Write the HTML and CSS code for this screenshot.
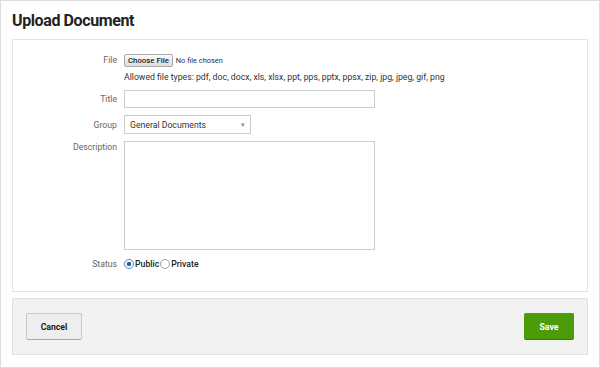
FILE: index.html
```html
<!DOCTYPE html>
<html>
<head>
  <title>Upload Document</title>
  <link rel="stylesheet" href="styles.css">
</head>
<body>
  <div class="page">
    <h1 class="page-title">Upload Document</h1>

    <div class="form-panel">
      <div class="form-row row-file">
        <label class="form-label">File</label>
        <div class="form-field">
          <button class="file-btn" type="button">Choose File</button>
          <span class="file-name">No file chosen</span>
        </div>
      </div>
      <div class="form-row row-hint">
        <span></span>
        <div class="form-hint">Allowed file types: pdf, doc, docx, xls, xlsx, ppt, pps, pptx, ppsx, zip, jpg, jpeg, gif, png</div>
      </div>
      <div class="form-row">
        <label class="form-label">Title</label>
        <input class="text-input" type="text">
      </div>
      <div class="form-row">
        <label class="form-label">Group</label>
        <div class="select-box">
          <span>General Documents</span>
          <span class="select-arrow">&#9662;</span>
        </div>
      </div>
      <div class="form-row row-top">
        <label class="form-label">Description</label>
        <textarea class="text-area"></textarea>
      </div>
      <div class="form-row row-status">
        <label class="form-label">Status</label>
        <div class="radio-group">
          <span class="radio checked"></span><span class="radio-text">Public</span>
          <span class="radio"></span><span class="radio-text">Private</span>
        </div>
      </div>
    </div>

    <div class="form-footer">
      <button class="btn btn-cancel" type="button">Cancel</button>
      <button class="btn btn-save" type="button">Save</button>
    </div>
  </div>
</body>
</html>
```

FILE: styles.css
```css
html, body {
  margin: 0;
  padding: 0;
  background: #ffffff;
}

body {
  font-family: Roboto, 'Liberation Sans', Arial, sans-serif;
  color: #333333;
}

.page {
  width: 600px;
  height: 368px;
  box-sizing: border-box;
  border: 1px solid #dddddd;
  padding: 0 11px;
}

.page-title {
  margin: 8px 0 6px 0;
  font-size: 16px;
  line-height: 24px;
  font-weight: 700;
  letter-spacing: -0.4px;
  color: #222222;
}

/* main form box */
.form-panel {
  border: 1px solid #e3e3e3;
  background: #ffffff;
  padding: 13px 0 21px 0;
  display: flex;
  flex-direction: column;
  gap: 7px;
}

.form-row {
  display: grid;
  grid-template-columns: 104px 1fr;
  column-gap: 7px;
  align-items: center;
}

.row-top { align-items: start; }
.row-hint { margin-top: -3px; }
.row-status { margin-top: 1px; }

.form-label {
  text-align: right;
  font-size: 8.7px;
  color: #666666;
  line-height: 12px;
}

.row-top .form-label { margin-top: 0; }

.form-field {
  display: flex;
  align-items: center;
  gap: 3px;
  height: 14px;
}

.file-btn {
  height: 13px;
  padding: 0 3px;
  margin: 0;
  font-family: inherit;
  font-size: 7.8px;
  font-weight: 500;
  color: #222222;
  background: linear-gradient(#fafafa, #dedede);
  border: 1px solid #a9a9a9;
  border-radius: 2px;
  line-height: 11px;
}

.file-name {
  font-size: 7.4px;
  color: #333333;
}

.form-hint {
  font-size: 8.7px;
  line-height: 12px;
  color: #333333;
}

.text-input {
  width: 251px;
  height: 18px;
  box-sizing: border-box;
  margin: 0;
  border: 1px solid #cccccc;
  padding: 2px 4px;
}

.select-box {
  width: 127px;
  height: 19px;
  box-sizing: border-box;
  border: 1px solid #cccccc;
  display: flex;
  align-items: center;
  justify-content: space-between;
  padding: 0 5px 0 5px;
  font-size: 8.7px;
  color: #333333;
}

.select-arrow {
  font-size: 7px;
  color: #888888;
}

.text-area {
  width: 251px;
  height: 109px;
  box-sizing: border-box;
  margin: 0;
  border: 1px solid #cccccc;
  resize: none;
  display: block;
}

.radio-group {
  display: flex;
  align-items: center;
  height: 12px;
  font-size: 8.7px;
  color: #222222;
}

.radio {
  width: 8px;
  height: 8px;
  border: 1px solid #a0a0a0;
  border-radius: 50%;
  background: #ffffff;
  margin: 0 1px 0 0;
}

.radio.checked {
  border-color: #4a86c8;
  background: radial-gradient(circle, #2f5f9a 0 2px, #ffffff 2.5px);
}

.radio-text {
  font-weight: 500;
  margin-right: 1px;
}

/* footer bar */
.form-footer {
  margin-top: 6px;
  height: 57px;
  box-sizing: border-box;
  border: 1px solid #e0e0e0;
  background: #f2f2f2;
  padding: 0 13px;
  display: flex;
  justify-content: space-between;
  align-items: center;
}

.btn {
  height: 27px;
  margin: 0;
  font-family: inherit;
  font-size: 8.7px;
  font-weight: 700;
  border-radius: 2px;
  cursor: pointer;
}

.btn-cancel {
  width: 56px;
  background: #eeeeee;
  color: #222222;
  border: 1px solid #c8c8c8;
  border-bottom-color: #a8a8a8;
}

.btn-save {
  width: 50px;
  background: #4c9c0a;
  color: #ffffff;
  border: 1px solid #4c9c0a;
  border-bottom-color: #3a7a06;
}
```
